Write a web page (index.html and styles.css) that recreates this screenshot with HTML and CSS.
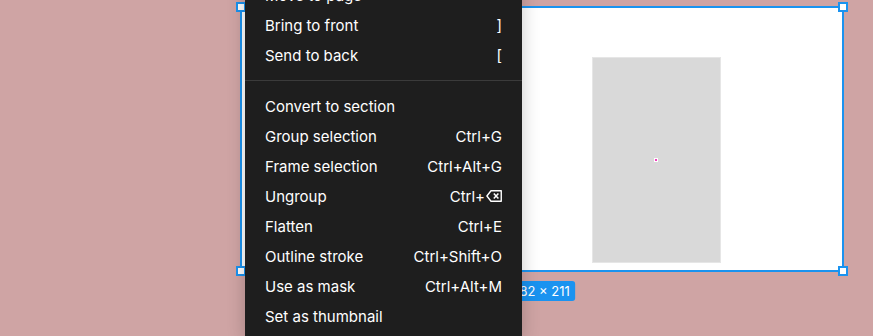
FILE: index.html
```html
<!DOCTYPE html>
<html lang="en">
<head>
    <meta charset="UTF-8">
    <meta name="viewport" content="width=device-width, initial-scale=1.0">
    <title>Context menu</title>
    <link rel="stylesheet" href="styles.css">
</head>
<body>

    <div class="canvas">
        <div class="frame">
            <div class="shape"></div>
            <div class="point"></div>
            <span class="handle tl"></span>
            <span class="handle tr"></span>
            <span class="handle bl"></span>
            <span class="handle br"></span>
            <div class="size-label">182 × 211</div>
        </div>

        <div class="menu">
            <div class="item">
                <span>Move to page</span>
                <svg class="chev" width="8" height="10" viewBox="0 0 8 10"><path d="M2 1l4 4-4 4" fill="none" stroke="#fff" stroke-width="1.2"/></svg>
            </div>
            <div class="item"><span>Bring to front</span><span class="key">]</span></div>
            <div class="item"><span>Send to back</span><span class="key">[</span></div>
            <div class="sep"></div>
            <div class="item"><span>Convert to section</span></div>
            <div class="item"><span>Group selection</span><span class="key">Ctrl+G</span></div>
            <div class="item"><span>Frame selection</span><span class="key">Ctrl+Alt+G</span></div>
            <div class="item">
                <span>Ungroup</span>
                <span class="key">Ctrl+<svg class="bksp" width="16" height="12" viewBox="0 0 16 12"><path d="M5 0.75H15.25V11.25H5L0.9 6Z" fill="none" stroke="#fff" stroke-width="1.4" stroke-linejoin="round"/><path d="M7.8 3.4l4.6 5.2M12.4 3.4l-4.6 5.2" stroke="#fff" stroke-width="1.5"/></svg></span>
            </div>
            <div class="item"><span>Flatten</span><span class="key">Ctrl+E</span></div>
            <div class="item"><span>Outline stroke</span><span class="key">Ctrl+Shift+O</span></div>
            <div class="item"><span>Use as mask</span><span class="key">Ctrl+Alt+M</span></div>
            <div class="item"><span>Set as thumbnail</span></div>
        </div>
    </div>

</body>
</html>
```

FILE: styles.css
```css
body {
    margin: 0;
    background-color: #cfa4a4;
    font-family: Inter, "Noto Sans", sans-serif;
    overflow: hidden;
}
.canvas {
    position: relative;
    width: 873px;
    height: 336px;
}
.frame {
    position: absolute;
    left: 240px;
    top: 6px;
    width: 600px;
    height: 262px;
    background-color: #fff;
    border: 2px solid #1a93f0;
}
.shape {
    position: absolute;
    left: 350px;
    top: 49px;
    width: 127px;
    height: 204px;
    background-color: #d9d9d9;
    border: 1px solid #e6e6e6;
}
.point {
    position: absolute;
    left: 413px;
    top: 151px;
    width: 2px;
    height: 2px;
    background-color: #f23fbf;
    box-shadow: 0 0 0 1px #fff;
}
.handle {
    position: absolute;
    width: 6px;
    height: 6px;
    background-color: #fff;
    border: 2px solid #1a93f0;
}
.handle.tl { left: -6px; top: -6px; }
.handle.tr { right: -6px; top: -6px; }
.handle.bl { left: -6px; bottom: -6px; }
.handle.br { right: -6px; bottom: -6px; }
.size-label {
    position: absolute;
    top: 273px;
    left: 50%;
    transform: translateX(-50%);
    height: 20px;
    line-height: 20px;
    padding: 0 5px;
    border-radius: 3px;
    background-color: #1a93f0;
    color: #fff;
    font-size: 13px;
    white-space: nowrap;
}
.menu {
    position: absolute;
    left: 245px;
    top: -28px;
    width: 277px;
    padding: 8px 0;
    background-color: #1e1e1e;
    border-radius: 2px;
    box-shadow: 0 2px 18px rgba(0, 0, 0, 0.22);
}
.item {
    display: flex;
    justify-content: space-between;
    align-items: center;
    height: 30px;
    padding: 0 20px;
    color: #fff;
    font-size: 15px;
}
.key {
    display: flex;
    align-items: center;
}
.bksp {
    margin-left: 1px;
}
.chev {
    margin-right: 2px;
}
.sep {
    height: 1px;
    margin: 10px 0;
    background-color: #3b3b3b;
}
```
